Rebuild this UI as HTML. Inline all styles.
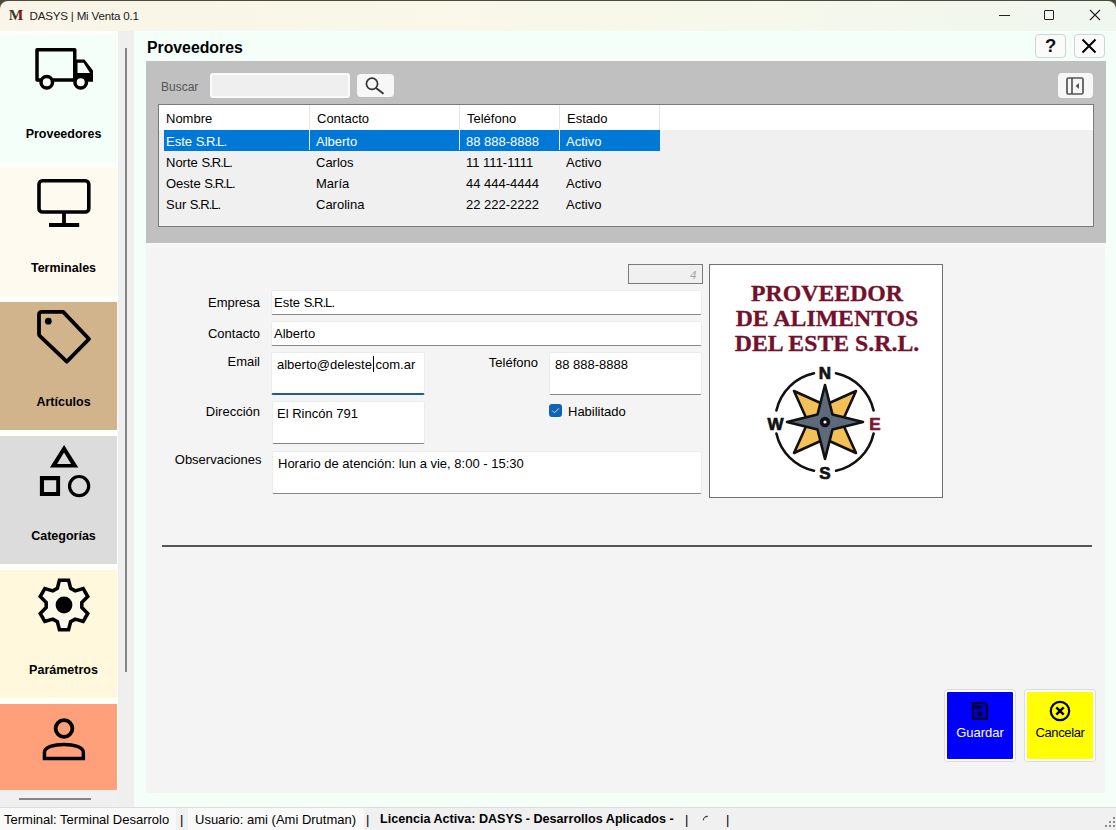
<!DOCTYPE html>
<html><head><meta charset="utf-8">
<style>
*{margin:0;padding:0;box-sizing:border-box}
html,body{width:1116px;height:830px;overflow:hidden;background:#f0f0f0;font-family:"Liberation Sans",sans-serif;font-size:13px;color:#000}
.a{position:absolute}
#titlebar{left:0;top:1px;width:1116px;height:30px;background:linear-gradient(90deg,#f9f5e8 0%,#f9f7e8 35%,#f5f8eb 70%,#f0f7ef 100%);border-radius:8px 8px 0 0}
.ttl{left:29.5px;top:9px;font-size:11.6px;letter-spacing:-0.2px;color:#202020;white-space:nowrap}
#sidebar{left:0;top:31px;width:118px;height:759px;background:#fffffb;overflow:hidden}
.item{width:117px!important}
.strip{left:118px;top:31px;width:16px;height:776px;background:#efefef}
.item{position:absolute;left:0;width:118px;height:128px}
.item .lbl{position:absolute;left:0;width:127px;top:92.5px;text-align:center;font-weight:bold;font-size:12.5px;line-height:14px}
.item svg{position:absolute;left:32px;top:3px}
#content{left:134px;top:31px;width:982px;height:776px;background:#f5fffa}
.ptitle{left:147px;top:38.5px;font-size:15.8px;font-weight:bold;line-height:18px}
.tbtn{top:34px;width:30.5px;height:23.5px;border:1px solid #d2d2d2;border-radius:4px;background:#fbfbfb}
#grey{left:146px;top:61px;width:960px;height:182px;background:#c0c0c0}
.lbl12{font-size:12px;color:#555}
#table{left:158px;top:104px;width:936px;height:123px;border:1px solid #7a7a7a;background:#f0f0f0}
.hdr{position:absolute;left:0;top:0;width:934px;height:25px;background:#fff}
.hcell{position:absolute;top:0;height:25px;border-right:1px solid #e5e5e5;padding-left:7px;line-height:28px}
.row{position:absolute;left:5px;height:21px;line-height:23px;width:496px}
.row span{position:absolute;top:0}
.sel{background:#0078d7;color:#fff}
#form{left:146px;top:243px;width:959px;height:550px;background:linear-gradient(#f7f9f7 0,#f4f4f4 7px)}
.flbl{text-align:right;white-space:nowrap;line-height:15px}
.inp{background:#fff;border:1px solid #ececec;border-bottom:1px solid #868686;border-radius:2px}
.itxt{white-space:nowrap;line-height:15px}
#status{left:0;top:807px;width:1116px;height:23px;background:#f0f0f0;border-top:1px solid #dcdcdc}
.srl{font-style:normal;letter-spacing:-0.95px}
.stx{line-height:17.5px;white-space:nowrap}
</style></head><body>
<div class="a" style="left:0;top:0;width:1116px;height:12px;background:#4b4a3e"></div>
<div id="titlebar" class="a"></div>
<svg class="a" style="left:7px;top:6px" width="20" height="16" viewBox="0 0 20 16"><defs><linearGradient id="mg" x1="0" x2="1" y1="0" y2="0"><stop offset="0" stop-color="#5b3b2e"/><stop offset="0.3" stop-color="#3a3a2a"/><stop offset="0.45" stop-color="#1f3d24"/><stop offset="0.6" stop-color="#3a2a20"/><stop offset="0.72" stop-color="#7a1818"/><stop offset="1" stop-color="#6e1414"/></linearGradient></defs><text x="1.8" y="13.7" font-family="Liberation Serif" font-weight="bold" font-size="15.5" fill="url(#mg)">M</text></svg>
<div class="a ttl">DASYS | Mi Venta 0.1</div>
<!-- window controls -->
<div class="a" style="left:999px;top:15px;width:11px;height:1px;background:#222"></div>
<div class="a" style="left:1044px;top:10px;width:10px;height:10px;border:1px solid #222;border-radius:1px"></div>
<svg class="a" style="left:1089px;top:9px" width="12" height="12" viewBox="0 0 12 12"><path d="M1 1L11 11M11 1L1 11" stroke="#222" stroke-width="1.1"/></svg>


<div id="sidebar" class="a">
 <div class="item" style="top:3px;background:#f5fffa">
  <svg width="64" height="64" viewBox="0 0 64 64"><path d="M5,12.75H42.75V43H5Z" fill="none" stroke="#000" stroke-width="3.5" stroke-linejoin="round"/><path fill-rule="evenodd" d="M44,22.5H52.5L61,33.4V44.8H44Z M45.5,25.8H51.5L58,36H45.5Z" fill="#000"/><circle cx="14.75" cy="45.2" r="5.75" fill="#f5fffa" stroke="#000" stroke-width="3.5"/><circle cx="48.7" cy="45.2" r="5.75" fill="#f5fffa" stroke="#000" stroke-width="3.5"/></svg>
  <div class="lbl">Proveedores</div>
 </div>
 <div class="item" style="top:137px;background:#fffaf0">
  <svg width="64" height="64" viewBox="0 0 64 64"><rect x="7" y="9.8" width="49.8" height="31.2" rx="3.5" fill="none" stroke="#000" stroke-width="3.6"/><path d="M32,42V53M17,54H47.2" stroke="#000" stroke-width="3.8" fill="none"/></svg>
  <div class="lbl">Terminales</div>
 </div>
 <div class="item" style="top:271px;background:#d2b48c">
  <svg width="64" height="64" viewBox="0 0 64 64"><path d="M7,10Q7,6.9 10,6.9H31.2L57,34L34.8,56.6L8,31.2Q7,30.3 7,29Z" fill="none" stroke="#000" stroke-width="3.8" stroke-linejoin="round"/><circle cx="16.3" cy="16.2" r="3.4" fill="#000"/></svg>
  <div class="lbl">Artículos</div>
 </div>
 <div class="item" style="top:405px;background:#dcdcdc">
  <svg width="64" height="64" viewBox="0 0 64 64"><path fill-rule="evenodd" d="M32.1,6L46.3,28.5H17.9Z M32,13.6L39.1,24.9H25.1Z" fill="#000"/><path fill-rule="evenodd" d="M7.9,37.1H28.1V57H7.9Z M12,41.2H24.2V53H12Z" fill="#000"/><circle cx="47.1" cy="47.1" r="9.6" fill="none" stroke="#000" stroke-width="3.2"/></svg>
  <div class="lbl">Categorías</div>
 </div>
 <div class="item" style="top:539px;background:#fff8dc">
  <svg width="64" height="64" viewBox="0 0 64 64"><path d="M25.36,15.27 L27.43,7.22 L36.57,7.22 L38.64,15.27 L43.17,17.88 L51.17,15.65 L55.75,23.57 L49.81,29.38 L49.81,34.62 L55.75,40.43 L51.17,48.35 L43.17,46.12 L38.64,48.73 L36.57,56.78 L27.43,56.78 L25.36,48.73 L20.83,46.12 L12.83,48.35 L8.25,40.43 L14.19,34.62 L14.19,29.38 L8.25,23.57 L12.83,15.65 L20.83,17.88Z" fill="#fbf9ea" stroke="#000" stroke-width="3.5" stroke-linejoin="miter"/><circle cx="32" cy="32" r="8.4" fill="#000"/></svg>
  <div class="lbl">Parámetros</div>
 </div>
 <div class="item" style="top:673px;background:#ffa07a;height:86px">
  <svg width="64" height="64" viewBox="0 0 64 64"><circle cx="32" cy="21.5" r="8.4" fill="none" stroke="#000" stroke-width="3.8"/><path d="M12.45,51.45V45.5C12.45,40 22,37.55 31.9,37.55C41.8,37.55 51.35,40 51.35,45.5V51.45Z" fill="none" stroke="#000" stroke-width="3.5" stroke-linejoin="miter"/></svg>
 </div>
</div>
<div class="a strip"></div>
<div class="a" style="left:125px;top:48px;width:2px;height:624px;background:#858585"></div>
<div class="a" style="left:19px;top:798px;width:72px;height:2px;background:#858585"></div>

<div id="content" class="a"></div>
<div class="a ptitle">Proveedores</div>
<div class="a tbtn" style="left:1035px"></div>
<div class="a tbtn" style="left:1074px"></div>
<div class="a" style="left:1045px;top:36px;font-size:18.5px;font-weight:bold;line-height:20px;color:#111">?</div>
<svg class="a" style="left:1081px;top:38px" width="16" height="16" viewBox="0 0 16 16"><path d="M1.5,1.5L14.5,14.5M14.5,1.5L1.5,14.5" stroke="#000" stroke-width="2"/></svg>

<div id="grey" class="a"></div>
<div class="a lbl12" style="left:161px;top:80px">Buscar</div>
<div class="a" style="left:210px;top:73px;width:140px;height:25px;background:#efefef;border:2px solid #fafafa;border-radius:3px"></div>
<div class="a" style="left:357px;top:74px;width:37px;height:23px;background:#f7f7f7;border-radius:4px"></div>
<svg class="a" style="left:364px;top:76px" width="22" height="20" viewBox="0 0 22 20"><circle cx="8" cy="7.8" r="5.6" fill="none" stroke="#333" stroke-width="1.7"/><path d="M12,12L19.5,17.8" stroke="#333" stroke-width="1.9"/></svg>
<div class="a" style="left:1058px;top:73px;width:35px;height:25px;background:#f7f7f7;border-radius:4px"></div>
<svg class="a" style="left:1065px;top:76px" width="20" height="20" viewBox="0 0 20 20"><rect x="2" y="2" width="16" height="16" rx="1.5" fill="none" stroke="#555" stroke-width="1.7"/><path d="M7,2V18" stroke="#555" stroke-width="1.7"/><path d="M14,7V13L10.5,10Z" fill="#555"/></svg>
<div id="table" class="a">
 <div class="hdr">
  <div class="hcell" style="left:0;width:151px">Nombre</div>
  <div class="hcell" style="left:151px;width:150px">Contacto</div>
  <div class="hcell" style="left:301px;width:100px">Teléfono</div>
  <div class="hcell" style="left:401px;width:100px">Estado</div>
 </div>
 <div class="row sel" style="top:25px"><span style="left:2px">Este <em class="srl">S.R.L.</em></span><span style="left:152px">Alberto</span><span style="left:302px">88 888-8888</span><span style="left:402px">Activo</span>
  <div style="position:absolute;left:145px;top:0;width:1px;height:20px;background:#e8f2fb"></div><div style="position:absolute;left:295px;top:0;width:1px;height:20px;background:#e8f2fb"></div><div style="position:absolute;left:395px;top:0;width:1px;height:20px;background:#e8f2fb"></div></div>
 <div class="row" style="top:46px"><span style="left:2px">Norte <em class="srl">S.R.L.</em></span><span style="left:152px">Carlos</span><span style="left:302px">11 111-1111</span><span style="left:402px">Activo</span></div>
 <div class="row" style="top:67px"><span style="left:2px">Oeste <em class="srl">S.R.L.</em></span><span style="left:152px">María</span><span style="left:302px">44 444-4444</span><span style="left:402px">Activo</span></div>
 <div class="row" style="top:88px"><span style="left:2px">Sur <em class="srl">S.R.L.</em></span><span style="left:152px">Carolina</span><span style="left:302px">22 222-2222</span><span style="left:402px">Activo</span></div>
</div>

<div id="form" class="a"></div>
<div class="a" style="left:628px;top:264px;width:75px;height:20px;background:#f0f0f0;border:1px solid #7a7a7a"></div>
<div class="a" style="left:690px;top:269px;font-style:italic;color:#a6a6a6;font-size:11.5px;line-height:13px">4</div>
<div class="a flbl" style="left:160px;width:100px;top:295px">Empresa</div>
<div class="a inp" style="left:271px;top:290px;width:431px;height:25px"></div>
<div class="a itxt" style="left:274px;top:295px">Este <em class="srl">S.R.L.</em></div>
<div class="a flbl" style="left:160px;width:100px;top:326px">Contacto</div>
<div class="a inp" style="left:271px;top:321px;width:431px;height:25px"></div>
<div class="a itxt" style="left:274px;top:326px">Alberto</div>
<div class="a flbl" style="left:160px;width:100px;top:354px">Email</div>
<div class="a inp" style="left:271px;top:352px;width:154px;height:43px;border-bottom:2px solid #1f5f8f"></div>
<div class="a itxt" style="left:277px;top:357px">alberto@deleste.com.ar</div>
<div class="a" style="left:373px;top:356px;width:1px;height:16px;background:#000"></div>
<div class="a flbl" style="left:438px;width:100px;top:355px">Teléfono</div>
<div class="a inp" style="left:549px;top:352px;width:153px;height:43px"></div>
<div class="a itxt" style="left:555px;top:357px">88 888-8888</div>
<div class="a flbl" style="left:160px;width:100px;top:404px">Dirección</div>
<div class="a inp" style="left:272px;top:401px;width:153px;height:43px"></div>
<div class="a itxt" style="left:277px;top:406px">El Rincón 791</div>
<div class="a" style="left:549px;top:404px;width:13px;height:13px;background:#0f62b5;border-radius:3px"></div>
<svg class="a" style="left:549px;top:404px" width="13" height="13" viewBox="0 0 13 13"><path d="M3.3,6.6L5.5,8.8L9.9,4.3" fill="none" stroke="#bfe0ff" stroke-width="1"/></svg>
<div class="a itxt" style="left:568px;top:404px">Habilitado</div>
<div class="a flbl" style="left:161.5px;width:100px;top:452px">Observaciones</div>
<div class="a inp" style="left:272px;top:451px;width:430px;height:43px"></div>
<div class="a itxt" style="left:278px;top:456px">Horario de atención: lun a vie, 8:00 - 15:30</div>
<div class="a" style="left:709px;top:264px;width:234px;height:234px;background:#fff;border:1px solid #707070"></div>
<div class="a" style="left:710px;top:281px;width:234px;text-align:center;font-family:'Liberation Serif',serif;font-weight:bold;font-size:23.8px;line-height:25px;color:#73102c;-webkit-text-stroke:0.3px #73102c">PROVEEDOR<br>DE ALIMENTOS<br>DEL ESTE S.R.L.</div>
<svg class="a" style="left:765px;top:362px" width="120" height="120" viewBox="0 0 120 120">
 <g fill="none" stroke="#111" stroke-width="2.6" stroke-linecap="round">
  <path d="M49,11.2A49,49 0 0 0 11.4,48.5"/>
  <path d="M71,11.2A49,49 0 0 1 108.6,48.5"/>
  <path d="M49,108.8A49,49 0 0 1 11.4,71.5"/>
  <path d="M71,108.8A49,49 0 0 0 108.6,71.5"/>
 </g>
 <path d="M29,29L60,43L91,29L77,60L91,91L60,77L29,91L43,60Z" fill="#f4c058" stroke="#111" stroke-width="2.6" stroke-linejoin="round"/>
 <path d="M60,23L67.5,52.5L98,60L67.5,67.5L60,97L52.5,67.5L22,60L52.5,52.5Z" fill="#5d6a7c" stroke="#111" stroke-width="2.6" stroke-linejoin="round"/>
 <circle cx="60" cy="60" r="3.4" fill="#fff" stroke="#111" stroke-width="3.6"/>
 <text x="60" y="17" text-anchor="middle" font-family="Liberation Sans" font-weight="bold" font-size="17" fill="#111" stroke="#111" stroke-width="0.7">N</text>
 <text x="60" y="117" text-anchor="middle" font-family="Liberation Sans" font-weight="bold" font-size="17" fill="#111" stroke="#111" stroke-width="0.7">S</text>
 <text x="10.5" y="68" text-anchor="middle" font-family="Liberation Sans" font-weight="bold" font-size="17" fill="#111" stroke="#111" stroke-width="0.7">W</text>
 <text x="110" y="68" text-anchor="middle" font-family="Liberation Sans" font-weight="bold" font-size="17" fill="#7b1430" stroke="#7b1430" stroke-width="0.7">E</text>
</svg>
<div class="a" style="left:162px;top:545px;width:930px;height:2px;background:#555"></div>
<div class="a" style="left:945px;top:690px;width:70px;height:71px;background:#0000ff;border:2px solid #fff;border-radius:3px;box-shadow:0 0 0 1px #dcdcdc"></div>
<div class="a" style="left:1025px;top:690px;width:70px;height:71px;background:#ffff00;border:2px solid #fff;border-radius:3px;box-shadow:0 0 0 1px #dcdcdc"></div>
<svg class="a" style="left:970px;top:701px" width="20" height="20" viewBox="0 0 20 20"><path d="M2.8,1.9H14.6L17.1,4.4V18.1H2.8Z" fill="#0000c4" stroke="#000028" stroke-width="1.9" stroke-linejoin="miter"/><rect x="4.2" y="4.4" width="7.2" height="3.2" fill="#000028"/><circle cx="9.9" cy="13" r="2.5" fill="#000028"/></svg>
<svg class="a" style="left:1049px;top:700px" width="22" height="22" viewBox="0 0 22 22"><circle cx="11" cy="11" r="9.2" fill="none" stroke="#000" stroke-width="2.2"/><path d="M7.3,7.3L14.7,14.7M14.7,7.3L7.3,14.7" stroke="#000" stroke-width="2.4"/></svg>
<div class="a" style="left:945px;top:725px;width:70px;text-align:center;color:#fff;line-height:15px">Guardar</div>
<div class="a" style="left:1025px;top:725px;width:70px;text-align:center;color:#000;line-height:15px;letter-spacing:-0.35px">Cancelar</div>

<div id="status" class="a"></div>
<div class="a" style="left:0;top:808px;width:176px;height:22px;background:#f9f9f9"></div>
<div class="a stx" style="left:4px;top:811px">Terminal: Terminal Desarrolo</div>
<div class="a stx" style="left:180px;top:811px">|</div>
<div class="a" style="left:188px;top:808px;width:176px;height:22px;background:#f9f9f9"></div>
<div class="a stx" style="left:195px;top:811px">Usuario: ami (Ami Drutman)</div>
<div class="a stx" style="left:366px;top:811px">|</div>
<div class="a stx" style="left:380px;top:811px;font-weight:bold;font-size:12.6px">Licencia Activa: DASYS - Desarrollos Aplicados -</div>
<div class="a stx" style="left:685px;top:811px">|</div>
<div class="a stx" style="left:726px;top:811px">|</div>
<svg class="a" style="left:701px;top:815px" width="10" height="10" viewBox="0 0 10 10"><path d="M2.3,5.2A4.2,4.2 0 0 1 6.8,1.4" fill="none" stroke="#333" stroke-width="1.1"/></svg>
<div class="a" style="left:1113px;top:817px;width:2px;height:2px;background:#8a8a8a"></div><div class="a" style="left:1109px;top:821px;width:2px;height:2px;background:#8a8a8a"></div><div class="a" style="left:1113px;top:821px;width:2px;height:2px;background:#8a8a8a"></div><div class="a" style="left:1105px;top:825px;width:2px;height:2px;background:#8a8a8a"></div><div class="a" style="left:1109px;top:825px;width:2px;height:2px;background:#8a8a8a"></div><div class="a" style="left:1113px;top:825px;width:2px;height:2px;background:#8a8a8a"></div>
</body></html>
